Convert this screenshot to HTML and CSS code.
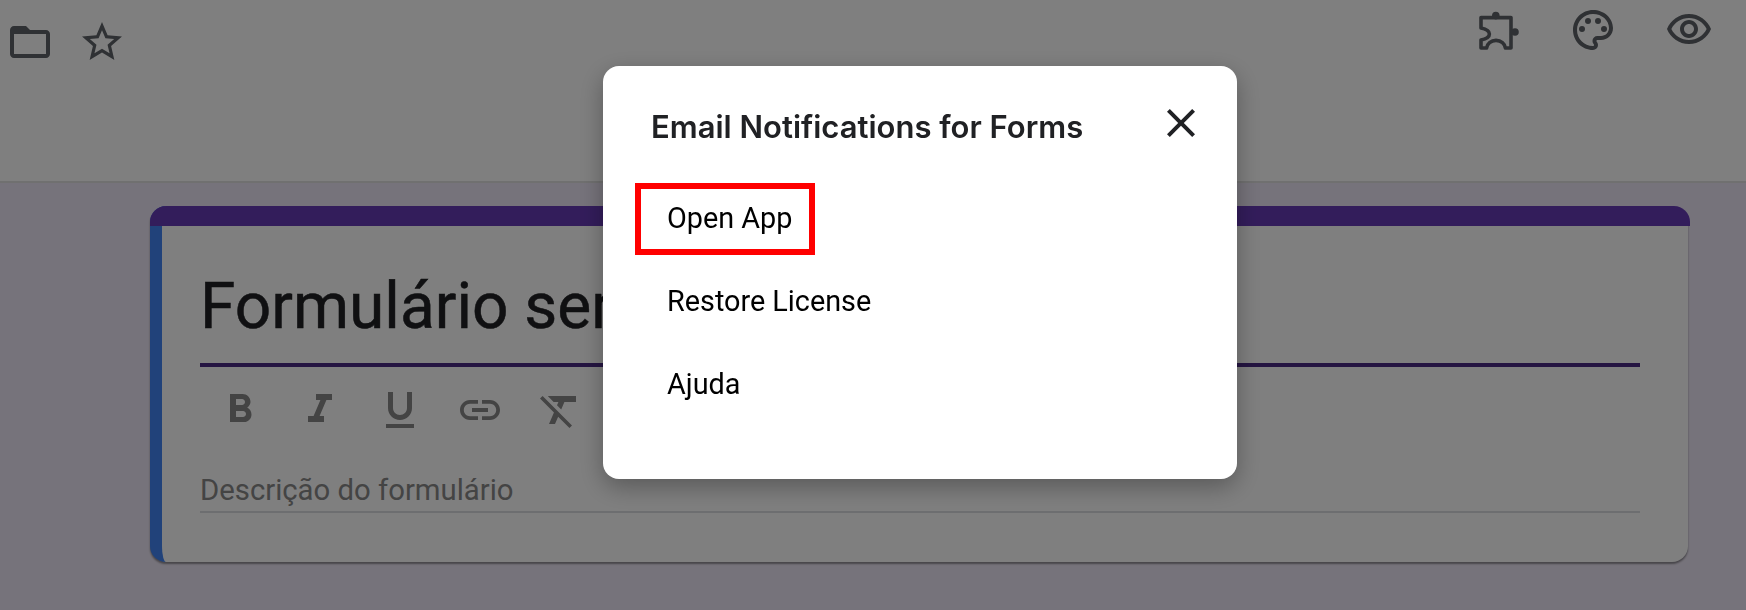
FILE: index.html
```html
<!DOCTYPE html>
<html lang="pt">

<head>
    <meta charset="UTF-8">
    <title>Formulário sem título</title>
    <link rel="stylesheet" href="styles.css">
</head>

<body>
    <header class="topbar">
        <div class="topbar-left">
            <svg class="icon" viewBox="0 0 24 24"><path d="M20 6h-8l-2-2H4c-1.1 0-1.99.9-1.99 2L2 18c0 1.1.9 2 2 2h16c1.1 0 2-.9 2-2V8c0-1.1-.9-2-2-2zm0 12H4V8h16v10z"/></svg>
            <svg class="icon" viewBox="0 0 24 24"><path d="M22 9.24l-7.19-.62L12 2 9.19 8.63 2 9.24l5.46 4.73L5.82 21 12 17.27 18.18 21l-1.63-7.03L22 9.24zM12 15.4l-3.76 2.27 1-4.28-3.32-2.88 4.38-.38L12 6.1l1.71 4.04 4.38.38-3.32 2.88 1 4.28L12 15.4z"/></svg>
        </div>
        <div class="topbar-right">
            <svg class="icon" viewBox="0 0 24 24"><path class="puzzle" d="M4 5.8H19V21H16.2C16 18.8 14 17.2 11.5 17.2S7 18.8 6.8 21H4V17C6.5 16.5 8.2 15.8 8.2 14S6.5 11.5 4 11Z"/><circle cx="11.4" cy="4.8" r="1.9"/><circle cx="21" cy="13" r="1.9"/></svg>
            <svg class="icon" viewBox="0 0 24 24"><path d="M12 22C6.49 22 2 17.51 2 12S6.49 2 12 2s10 4.04 10 9c0 3.31-2.69 6-6 6h-1.77c-.28 0-.5.22-.5.5 0 .12.05.23.13.33.41.47.64 1.06.64 1.67A2.5 2.5 0 0 1 12 22zm0-18c-4.41 0-8 3.59-8 8s3.59 8 8 8c.28 0 .5-.22.5-.5a.54.54 0 0 0-.14-.35c-.41-.46-.63-1.05-.63-1.65a2.5 2.5 0 0 1 2.5-2.5H16c2.21 0 4-1.79 4-4 0-3.86-3.59-7-8-7z"/><circle cx="6.5" cy="11.5" r="1.5"/><circle cx="9.5" cy="7.5" r="1.5"/><circle cx="14.5" cy="7.5" r="1.5"/><circle cx="17.5" cy="11.5" r="1.5"/></svg>
            <svg class="icon" viewBox="0 0 24 24"><path d="M12 6c3.79 0 7.17 2.13 8.82 5.5C19.17 14.87 15.79 17 12 17s-7.17-2.13-8.82-5.5C4.83 8.13 8.21 6 12 6m0-2C7 4 2.73 7.11 1 11.5 2.73 15.89 7 19 12 19s9.27-3.11 11-7.5C21.27 7.11 17 4 12 4zm0 5c1.38 0 2.5 1.12 2.5 2.5S13.38 14 12 14s-2.5-1.12-2.5-2.5S10.62 9 12 9m0-2c-2.48 0-4.5 2.02-4.5 4.5S9.52 16 12 16s4.5-2.02 4.5-4.5S14.48 7 12 7z"/></svg>
        </div>
    </header>

    <main class="content">
        <section class="form-card">
            <div class="form-card-band"></div>
            <div class="form-card-body">
                <h1 class="form-title">Formulário sem título</h1>
                <div class="format-bar">
                    <svg class="icon" viewBox="0 0 24 24"><path d="M15.6 10.79c.97-.67 1.65-1.77 1.65-2.79 0-2.26-1.75-4-4-4H7v14h7.04c2.09 0 3.71-1.7 3.71-3.79 0-1.52-.86-2.82-2.15-3.42zM10 6.5h3c.83 0 1.5.67 1.5 1.5s-.67 1.5-1.5 1.5h-3v-3zm3.5 9H10v-3h3.5c.83 0 1.5.67 1.5 1.5s-.67 1.5-1.5 1.5z"/></svg>
                    <svg class="icon" viewBox="0 0 24 24"><path d="M10 4v3h2.21l-3.42 8H6v3h8v-3h-2.21l3.42-8H18V4z"/></svg>
                    <svg class="icon" viewBox="0 0 24 24"><path d="M12 17c3.31 0 6-2.69 6-6V3h-2.5v8c0 1.93-1.57 3.5-3.5 3.5S8.5 12.93 8.5 11V3H6v8c0 3.31 2.69 6 6 6zm-7 2v2h14v-2H5z"/></svg>
                    <svg class="icon" viewBox="0 0 24 24"><path d="M3.9 12c0-1.71 1.39-3.1 3.1-3.1h4V7H7c-2.76 0-5 2.24-5 5s2.24 5 5 5h4v-1.9H7c-1.71 0-3.1-1.39-3.1-3.1zM8 13h8v-2H8v2zm9-6h-4v1.9h4c1.71 0 3.1 1.39 3.1 3.1s-1.39 3.1-3.1 3.1h-4V17h4c2.76 0 5-2.24 5-5s-2.24-5-5-5z"/></svg>
                    <svg class="icon" viewBox="0 0 24 24"><path d="M3.27 5L2 6.27l6.97 6.97L6.5 19h3l1.57-3.66L16.73 21 18 19.73 3.55 5.27 3.27 5zM6 5v.18L8.82 8h2.4l-.72 1.68 2.1 2.1L14.21 8H20V5H6z"/></svg>
                </div>
                <div class="form-desc">Descrição do formulário</div>
            </div>
        </section>
    </main>

    <div class="overlay"></div>

    <div class="dialog">
        <div class="dialog-head">
            <h2 class="dialog-title">Email Notifications for Forms</h2>
            <svg class="dialog-close" viewBox="0 0 24 24"><path d="M19 6.41L17.59 5 12 10.59 6.41 5 5 6.41 10.59 12 5 17.59 6.41 19 12 13.41 17.59 19 19 17.59 13.41 12z"/></svg>
        </div>
        <ul class="menu">
            <li class="menu-item highlighted">Open App</li>
            <li class="menu-item">Restore License</li>
            <li class="menu-item">Ajuda</li>
        </ul>
    </div>
</body>

</html>
```

FILE: styles.css
```css
html,
body {
    height: 100%;
}

body {
    margin: 0;
    overflow: hidden;
    background-color: #ede7f6;
    font-family: Roboto, "Liberation Sans", sans-serif;
}

.icon {
    width: 48px;
    height: 48px;
    flex: none;
    fill: #5f6368;
}

.icon .puzzle {
    fill: none;
    stroke: #5f6368;
    stroke-width: 1.8;
    stroke-linejoin: round;
}

.topbar {
    height: 181px;
    display: flex;
    justify-content: space-between;
    background-color: #fff;
    border-bottom: 2px solid #e0e0e0;
}

.topbar-left {
    display: flex;
    gap: 24px;
    padding: 18px 0 0 6px;
}

.topbar-right {
    display: flex;
    gap: 48px;
    padding: 6px 33px 0 0;
}

.content {
    padding: 23px 0 0 150px;
}

.form-card {
    width: 1538px;
    height: 356px;
    box-sizing: border-box;
    background-color: #fff;
    border-radius: 16px;
    border-left: 12px solid #4285f4;
    box-shadow: 0 2px 2px rgba(0, 0, 0, 0.4);
}

.form-card-band {
    height: 20px;
    margin: 0 -2px 0 -12px;
    background-color: #673ab7;
    border-radius: 16px 16px 0 0;
}

.form-card-body {
    padding: 0 48px 0 38px;
}

.form-title {
    margin: 0;
    padding-top: 36px;
    height: 101px;
    line-height: 90px;
    font-size: 64px;
    font-weight: 400;
    color: #202124;
    -webkit-text-stroke: 0.5px #202124;
    border-bottom: 4px solid #4a2a84;
}

.format-bar {
    display: flex;
    gap: 32px;
    padding: 19px 0 0 16px;
}

.format-bar .icon {
    fill: #888;
}

.form-desc {
    margin-top: 35px;
    height: 42px;
    line-height: 42px;
    font-size: 29.3px;
    color: #888;
    border-bottom: 2px solid #dadce0;
}

.overlay {
    position: fixed;
    inset: 0;
    background-color: rgba(0, 0, 0, 0.5);
}

.dialog {
    position: fixed;
    left: 603px;
    top: 66px;
    width: 634px;
    height: 413px;
    box-sizing: border-box;
    background-color: #fff;
    border-radius: 16px;
    box-shadow: 0 8px 24px rgba(0, 0, 0, 0.3);
}

.dialog-head {
    display: flex;
    justify-content: space-between;
    align-items: center;
    height: 114px;
    padding: 0 32px 0 48px;
}

.dialog-title {
    margin: 6px 0 0;
    font-family: Inter, Roboto, sans-serif;
    font-size: 31px;
    font-weight: 600;
    color: #202124;
}

.dialog-close {
    width: 48px;
    height: 48px;
    fill: #202124;
}

.menu {
    list-style: none;
    margin: 0;
    padding: 3px 0 0 32px;
}

.menu-item {
    height: 83px;
    line-height: 70px;
    padding-left: 32px;
    font-size: 28.8px;
    color: #000;
}

.highlighted {
    width: 180px;
    height: 72px;
    line-height: 58px;
    box-sizing: border-box;
    padding-left: 26px;
    margin-bottom: 11px;
    border: 6px solid #f00;
}
```
